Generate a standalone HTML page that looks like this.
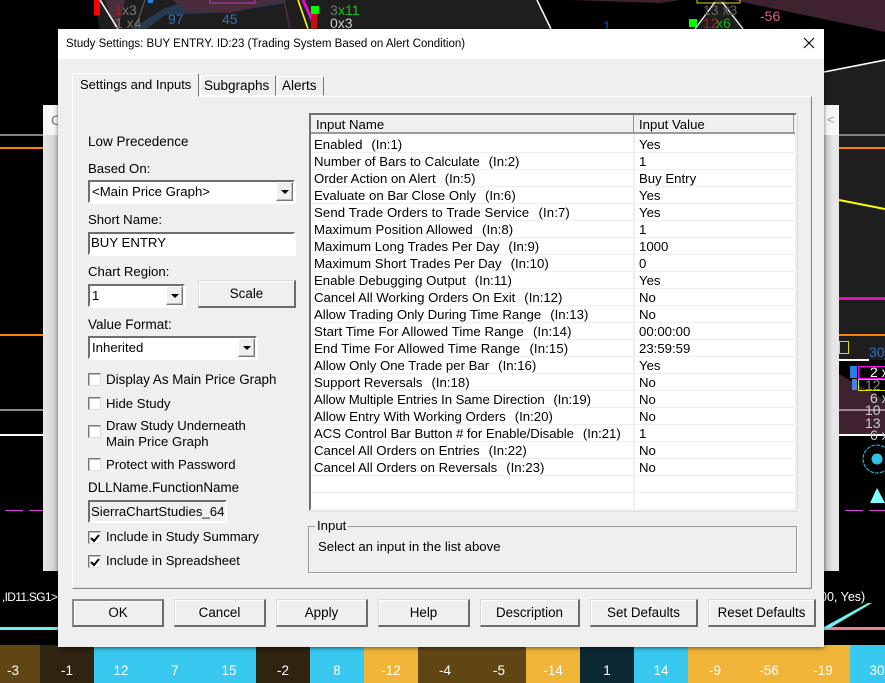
<!DOCTYPE html>
<html><head><meta charset="utf-8"><style>
html,body{margin:0;padding:0;background:#000}
#p{position:relative;width:885px;height:683px;overflow:hidden;background:#000;font-family:"Liberation Sans",sans-serif;font-size:14px;color:#000}
#p div{position:absolute;box-sizing:border-box}
.t{white-space:pre;line-height:16px;height:16px;font-size:13.2px}
.b{background:#efefef;border:1px solid #fff;border-top-color:#d8d8d8;border-left-color:#d8d8d8;border-right:2px solid #6b6b6b;border-bottom:2px solid #6b6b6b;outline:0;text-align:center;line-height:25px;white-space:pre;box-shadow:inset 1px 1px 0 #fff;font-size:13.4px}
.f{background:#fff;border:2px solid;border-color:#6e6e6e #fff #fff #6e6e6e;box-shadow:1px 1px 0 #fff}
.a{background:#efefef;border:1px solid;border-color:#fff #777 #777 #fff;box-shadow:inset -1px -1px 0 #bbb;}
.a:after{content:"";position:absolute;left:4px;top:7px;border:4px solid transparent;border-top:4px solid #000;border-bottom:0}
.c{width:13px;height:13px;background:#fff;border:1px solid;border-color:#777 #ddd #ddd #777;box-shadow:inset 1px 1px 0 #bbb;left:88px}
.h{height:1px;left:1px;width:486px;background:#efefef}
.g{color:#fff;font-size:13.5px;text-align:center;width:54px;top:663px;line-height:16px;height:16px}
.l{left:3px;width:320px}.v{left:328px;width:150px}
i{font-style:normal;margin-left:-2px}
</style></head><body><div id="p">
<svg width="885" height="683" style="position:absolute;left:0;top:0" font-family="Liberation Sans, sans-serif" font-size="14">
<rect width="885" height="683" fill="#000"/>
<polygon points="95,0 537,0 552,32 100,32" fill="#1e1e1e"/>
<polygon points="105,0 125,0 118,30 115,30" fill="#4a2c3a"/>
<polygon points="130,30 165,8 190,0 285,0 285,3 230,12 165,15 145,30" fill="#283a50"/>
<polygon points="172,0 285,0 230,13 190,12" fill="#4a2c3a"/>
<polygon points="570,0 680,0 660,3" fill="#3e2230"/>
<polygon points="733,0 885,0 885,32" fill="#3e2230"/>
<polygon points="695,30 715,0 725,0 745,30" fill="#1e1e1e"/>
<polygon points="824,72 885,60 885,360 824,360" fill="#1e1e1e"/>
<polygon points="839,374 885,400 885,436 839,434" fill="#3e2230"/>
<rect x="94" y="0" width="6" height="15" fill="#f00"/>
<rect x="148" y="0" width="5" height="3" fill="#2a80e0"/>
<rect x="311" y="6" width="8" height="8" fill="#0f0"/>
<rect x="689" y="19" width="8" height="8" fill="#0f0"/>
<rect x="210" y="-2" width="45" height="5" fill="none" stroke="#c040c0"/>
<rect x="697" y="-2" width="43" height="5" fill="none" stroke="#e0e000"/>
<line x1="100" y1="0" x2="118" y2="29" stroke="#fff" stroke-width="1.6"/>
<line x1="145" y1="0" x2="135" y2="29" stroke="#666"/>
<line x1="284" y1="0" x2="290" y2="29" stroke="#4a2c3a" stroke-width="2"/>
<line x1="298" y1="0" x2="308" y2="29" stroke="#ff0" stroke-width="1.6"/>
<line x1="303" y1="0" x2="316" y2="29" stroke="#e010d0" stroke-width="3"/>
<rect x="311" y="14" width="6" height="15" fill="#c01010"/>
<line x1="537" y1="0" x2="551" y2="29" stroke="#fff" stroke-width="1.5"/>
<line x1="715" y1="2" x2="695" y2="29" stroke="#eee" stroke-width="1.4"/>
<line x1="722" y1="2" x2="743" y2="29" stroke="#eee" stroke-width="1.4"/>
<line x1="824" y1="72" x2="885" y2="60" stroke="#fff" stroke-width="1.6"/>
<text x="115" y="15" fill="#a02020">1</text><text x="122" y="15" fill="#777">x3</text>
<text x="115" y="28" fill="#777">1 x4</text>
<text x="168" y="24" fill="#2a70c0">97</text><text x="222" y="24" fill="#2a70c0">45</text>
<text x="330" y="15" fill="#777">3</text><text x="338" y="15" fill="#20c020">x11</text>
<text x="330" y="28" fill="#ccc">0x3</text>
<text x="603" y="31" fill="#0050c0">1</text>
<text x="703" y="28" fill="#c01818">12</text><text x="716" y="28" fill="#20b020">x6</text>
<text x="703" y="15" fill="#666">13 x3</text>
<text x="760" y="21" fill="#e06090">-56</text>
<rect x="0" y="134" width="885" height="2" fill="#808080"/>
<rect x="0" y="147" width="885" height="2" fill="#ff8000"/>
<polyline points="839,200 885,209" stroke="#ff0" stroke-width="2" fill="none"/>
<rect x="839" y="297" width="46" height="3" fill="#e010c0"/>
<rect x="0" y="334" width="885" height="2" fill="#ff8000"/>
<rect x="839" y="359" width="30" height="2" fill="#fff"/>
<rect x="0" y="409" width="885" height="2" fill="#8a8a8a"/>
<rect x="839" y="409" width="46" height="2" fill="#a08898"/>
<rect x="0" y="434" width="885" height="2" fill="#fff"/>
<rect x="839.500" y="341.500" width="9" height="12" fill="none" stroke="#e0e000"/>
<text x="869" y="357" fill="#2a70c0">30</text>
<rect x="850" y="366" width="7" height="12" fill="#2a80e0"/>
<rect x="852" y="379" width="5" height="11" fill="#4a80e8"/>
<rect x="858.500" y="366.500" width="30" height="12" fill="#000" stroke="#f0f"/>
<rect x="858.500" y="379.500" width="30" height="11" fill="none" stroke="#e0e000"/>
<text x="870" y="377" fill="#fff">2 x</text>
<text x="865" y="390" fill="#888">12 x</text>
<text x="870" y="403" fill="#ccc">6 x</text>
<text x="865" y="415" fill="#ccc">10 x</text>
<text x="865" y="428" fill="#ccc">13 x</text>
<text x="870" y="440" fill="#ccc">6 x</text>
<circle cx="877" cy="459" r="14" fill="none" stroke="#30c0e8" stroke-width="1" stroke-dasharray="4 1"/>
<circle cx="877" cy="459" r="5.500" fill="#30c0e8"/>
<polygon points="877,488 885,503 870,503" fill="#80ffff"/>
<rect x="5" y="510" width="18" height="1" fill="#e040e0"/>
<rect x="29" y="510" width="14" height="1" fill="#e040e0"/>
<rect x="845" y="510" width="18" height="1" fill="#e040e0"/>
<rect x="869" y="510" width="16" height="1" fill="#e040e0"/>
<text x="2" y="601" fill="#fff" font-size="12" letter-spacing="-.7">,ID11.SG1&gt;</text>
<text x="820" y="601" fill="#fff" font-size="12.500">00, Yes)</text>
<rect x="0" y="627" width="60" height="3" fill="#70f0f0"/>
<rect x="824" y="627" width="61" height="3" fill="#f08080"/>
<polygon points="824,627 868,603 872,603 830,628 824,630" fill="#70f0f0"/>
<rect x="0" y="645" width="40" height="38" fill="#5f4614"/>
<rect x="40" y="645" width="54" height="38" fill="#2e2410"/>
<rect x="94" y="645" width="162" height="38" fill="#38c8f0"/>
<rect x="256" y="645" width="54" height="38" fill="#2e2410"/>
<rect x="310" y="645" width="54" height="38" fill="#38c8f0"/>
<rect x="364" y="645" width="54" height="38" fill="#f0b438"/>
<rect x="418" y="645" width="108" height="38" fill="#5f4614"/>
<rect x="526" y="645" width="54" height="38" fill="#f0b438"/>
<rect x="580" y="645" width="54" height="38" fill="#0c2a34"/>
<rect x="634" y="645" width="54" height="38" fill="#38c8f0"/>
<rect x="688" y="645" width="162" height="38" fill="#f0b438"/>
<rect x="850" y="645" width="35" height="38" fill="#38c8f0"/>
</svg>
<div class="g" style="left:-14px">-3</div><div class="g" style="left:40px">-1</div><div class="g" style="left:94px">12</div><div class="g" style="left:148px">7</div><div class="g" style="left:202px">15</div><div class="g" style="left:256px">-2</div><div class="g" style="left:310px">8</div><div class="g" style="left:364px">-12</div><div class="g" style="left:418px">-4</div><div class="g" style="left:472px">-5</div><div class="g" style="left:526px">-14</div><div class="g" style="left:580px">1</div><div class="g" style="left:634px">14</div><div class="g" style="left:688px">-9</div><div class="g" style="left:742px">-56</div><div class="g" style="left:796px">-19</div><div class="g" style="left:850px">30</div>

<div style="left:43px;top:105px;width:796px;height:466px;background:#e4e4e4;border-top:1px solid #333"></div>
<div style="left:43px;top:105px;width:796px;height:30px;background:#f6f6f6"></div>
<div class="t" style="left:51px;top:112px;color:#777;font-size:14px">C</div>
<div style="left:43px;top:135px;width:15px;height:436px;background:linear-gradient(90deg,#e8e8e8,#cfcfcf)"></div>
<div style="left:824px;top:135px;width:15px;height:436px;background:linear-gradient(90deg,#bdbdbd,#e6e6e6 60%)"></div>
<div style="left:824px;top:105px;width:15px;height:30px;background:#f6f6f6"></div>
<div class="t" style="left:827px;top:112px;color:#999;font-size:13px">&lt;</div>

<div id="d" style="left:58px;top:29px;width:766px;height:618px;background:#efefef;box-shadow:0 1px 4px rgba(0,0,0,.55);border:0">
 <div style="left:0;top:0;width:766px;height:30px;background:#fff"></div>
 <div class="t" style="left:8px;top:7px;font-size:11.500px">Study Settings: BUY ENTRY. ID:23 (Trading System Based on Alert Condition)</div>
 <svg style="position:absolute;left:745px;top:8px" width="12" height="12"><path d="M1 1L11 11M11 1L1 11" stroke="#000" stroke-width="1.100" fill="none"/></svg>

 <div style="left:14px;top:67px;width:740px;height:493px;border:1px solid;border-color:#fff #8a8a8a #8a8a8a #fff;box-shadow:inset -1px -1px 0 #ddd"></div>
 <div style="left:14px;top:44px;width:127px;height:24px;background:#efefef;border:1px solid;border-color:#fff #777 #efefef #fff;border-radius:2px 2px 0 0"></div>
 <div class="t" style="left:22px;top:48px;font-size:13px">Settings and Inputs</div>
 <div style="left:142px;top:46px;width:76px;height:21px;background:#efefef;border:1px solid;border-color:#fff #777 #fff #fff;border-radius:2px 2px 0 0"></div>
 <div class="t" style="left:146px;top:49px;font-size:13.500px">Subgraphs</div>
 <div style="left:219px;top:47px;width:47px;height:20px;background:#efefef;border:1px solid;border-color:#fff #777 #fff #fff;border-radius:2px 2px 0 0"></div>
 <div class="t" style="left:224px;top:49px;font-size:13.500px">Alerts</div>

 <div class="t" style="left:30px;top:105px;font-size:13.500px">Low Precedence</div>
 <div class="t" style="left:30px;top:132px">Based On:</div>
 <div class="f" style="left:30px;top:151px;width:207px;height:23px"></div>
 <div class="t" style="left:34px;top:155px">&lt;Main Price Graph&gt;</div>
 <div class="a" style="left:218px;top:153px;width:17px;height:19px"></div>
 <div class="t" style="left:30px;top:183px">Short Name:</div>
 <div class="f" style="left:30px;top:203px;width:207px;height:23px"></div>
 <div class="t" style="left:33px;top:206px">BUY ENTRY</div>
 <div class="t" style="left:30px;top:235px;font-size:13.200px">Chart Region:</div>
 <div class="f" style="left:30px;top:255px;width:97px;height:23px"></div>
 <div class="t" style="left:34px;top:259px">1</div>
 <div class="a" style="left:108px;top:257px;width:17px;height:19px"></div>
 <div class="b" style="left:140px;top:251px;width:98px;height:28px">Scale</div>
 <div class="t" style="left:30px;top:288px;font-size:13.500px">Value Format:</div>
 <div class="f" style="left:30px;top:307px;width:169px;height:23px"></div>
 <div class="t" style="left:34px;top:311px">Inherited</div>
 <div class="a" style="left:180px;top:309px;width:17px;height:19px"></div>

 <div class="c" style="left:30px;top:344px"></div><div class="t" style="left:48px;top:343px;font-size:13.400px">Display As Main Price Graph</div>
 <div class="c" style="left:30px;top:368px"></div><div class="t" style="left:48px;top:367px">Hide Study</div>
 <div class="c" style="left:30px;top:396px"></div><div class="t" style="left:48px;top:389px;font-size:13.100px">Draw Study Underneath</div><div class="t" style="left:48px;top:405px">Main Price Graph</div>
 <div class="c" style="left:30px;top:429px"></div><div class="t" style="left:48px;top:428px;font-size:13.100px">Protect with Password</div>
 <div class="t" style="left:30px;top:451px;font-size:13.400px">DLLName.FunctionName</div>
 <div style="left:30px;top:471px;width:139px;height:23px;background:#efefef;border:2px solid;border-color:#6e6e6e #fff #fff #6e6e6e"></div>
 <div class="t" style="left:33px;top:475px">SierraChartStudies_64</div>
 <div class="c" style="left:30px;top:502px"><svg style="position:absolute;left:1px;top:1px" width="10" height="10"><path d="M1 5L4 8L9 2" stroke="#000" stroke-width="2" fill="none"/></svg></div><div class="t" style="left:48px;top:500px;font-size:13.100px">Include in Study Summary</div>
 <div class="c" style="left:30px;top:526px"><svg style="position:absolute;left:1px;top:1px" width="10" height="10"><path d="M1 5L4 8L9 2" stroke="#000" stroke-width="2" fill="none"/></svg></div><div class="t" style="left:48px;top:524px;font-size:13.100px">Include in Spreadsheet</div>

 <div id="l" style="left:251px;top:84px;width:488px;height:398px;background:#fff;border:2px solid;border-color:#6e6e6e #efefef #efefef #6e6e6e;box-shadow:1px 1px 0 #ddd">
  <div style="left:0;top:0;width:484px;height:19px;background:#efefef;border-bottom:2px solid #9a9a9a"></div>
  <div style="left:322px;top:0;width:1px;height:19px;background:#9a9a9a"></div>
  <div style="left:482px;top:0;width:1px;height:19px;background:#9a9a9a"></div>
  <div class="t" style="left:5px;top:2px">Input Name</div><div class="t" style="left:328px;top:2px">Input Value</div>
  <div style="left:322px;top:19px;width:2px;height:377px;background:#efefef"></div>
  <div style="left:484px;top:0;width:1px;height:396px;background:#efefef"></div>
  <div class="h" style="top:37px"></div><div class="h" style="top:54px"></div><div class="h" style="top:71px"></div><div class="h" style="top:88px"></div><div class="h" style="top:105px"></div><div class="h" style="top:122px"></div><div class="h" style="top:139px"></div><div class="h" style="top:156px"></div><div class="h" style="top:173px"></div><div class="h" style="top:190px"></div><div class="h" style="top:207px"></div><div class="h" style="top:224px"></div><div class="h" style="top:241px"></div><div class="h" style="top:258px"></div><div class="h" style="top:275px"></div><div class="h" style="top:292px"></div><div class="h" style="top:309px"></div><div class="h" style="top:326px"></div><div class="h" style="top:343px"></div><div class="h" style="top:360px"></div><div class="h" style="top:377px"></div><div class="h" style="top:394px"></div>
  <div class="t l" style="top:22px">Enabled   <i>(In:1)</i></div><div class="t v" style="top:22px">Yes</div>
  <div class="t l" style="top:39px">Number of Bars to Calculate   <i>(In:2)</i></div><div class="t v" style="top:39px">1</div>
  <div class="t l" style="top:56px">Order Action on Alert   <i>(In:5)</i></div><div class="t v" style="top:56px">Buy Entry</div>
  <div class="t l" style="top:73px">Evaluate on Bar Close Only   <i>(In:6)</i></div><div class="t v" style="top:73px">Yes</div>
  <div class="t l" style="top:90px;letter-spacing:.1px">Send Trade Orders to Trade Service   <i>(In:7)</i></div><div class="t v" style="top:90px">Yes</div>
  <div class="t l" style="top:107px;letter-spacing:.08px">Maximum Position Allowed   <i>(In:8)</i></div><div class="t v" style="top:107px">1</div>
  <div class="t l" style="top:124px">Maximum Long Trades Per Day   <i>(In:9)</i></div><div class="t v" style="top:124px">1000</div>
  <div class="t l" style="top:141px">Maximum Short Trades Per Day   <i>(In:10)</i></div><div class="t v" style="top:141px">0</div>
  <div class="t l" style="top:158px">Enable Debugging Output   <i>(In:11)</i></div><div class="t v" style="top:158px">Yes</div>
  <div class="t l" style="top:175px">Cancel All Working Orders On Exit   <i>(In:12)</i></div><div class="t v" style="top:175px">No</div>
  <div class="t l" style="top:192px">Allow Trading Only During Time Range   <i>(In:13)</i></div><div class="t v" style="top:192px">No</div>
  <div class="t l" style="top:209px;letter-spacing:.07px">Start Time For Allowed Time Range   <i>(In:14)</i></div><div class="t v" style="top:209px">00:00:00</div>
  <div class="t l" style="top:226px;letter-spacing:.1px">End Time For Allowed Time Range   <i>(In:15)</i></div><div class="t v" style="top:226px">23:59:59</div>
  <div class="t l" style="top:243px">Allow Only One Trade per Bar   <i>(In:16)</i></div><div class="t v" style="top:243px">Yes</div>
  <div class="t l" style="top:260px">Support Reversals   <i>(In:18)</i></div><div class="t v" style="top:260px">No</div>
  <div class="t l" style="top:277px;letter-spacing:-.08px">Allow Multiple Entries In Same Direction   <i>(In:19)</i></div><div class="t v" style="top:277px">No</div>
  <div class="t l" style="top:294px">Allow Entry With Working Orders   <i>(In:20)</i></div><div class="t v" style="top:294px">No</div>
  <div class="t l" style="top:311px;letter-spacing:-.04px">ACS Control Bar Button # for Enable/Disable   <i>(In:21)</i></div><div class="t v" style="top:311px">1</div>
  <div class="t l" style="top:328px">Cancel All Orders on Entries   <i>(In:22)</i></div><div class="t v" style="top:328px">No</div>
  <div class="t l" style="top:345px">Cancel All Orders on Reversals   <i>(In:23)</i></div><div class="t v" style="top:345px">No</div>
 </div>

 <div style="left:250px;top:497px;width:489px;height:47px;border:1px solid #9a9a9a;box-shadow:1px 1px 0 #fff"></div>
 <div class="t" style="left:257px;top:489px;padding:0 2px;background:#efefef">Input</div>
 <div class="t" style="left:260px;top:510px">Select an input in the list above</div>

 <div class="b" style="left:14px;top:570px;width:92px;height:28px;border-width:2px;border-color:#8a8a8a #6b6b6b #6b6b6b #8a8a8a;line-height:24px">OK</div>
 <div class="b" style="left:116px;top:570px;width:92px;height:28px">Cancel</div>
 <div class="b" style="left:218px;top:570px;width:92px;height:28px">Apply</div>
 <div class="b" style="left:320px;top:570px;width:92px;height:28px">Help</div>
 <div class="b" style="left:422px;top:570px;width:100px;height:28px">Description</div>
 <div class="b" style="left:532px;top:570px;width:108px;height:28px">Set Defaults</div>
 <div class="b" style="left:650px;top:570px;width:108px;height:28px">Reset Defaults</div>
</div>
</div></body></html>
